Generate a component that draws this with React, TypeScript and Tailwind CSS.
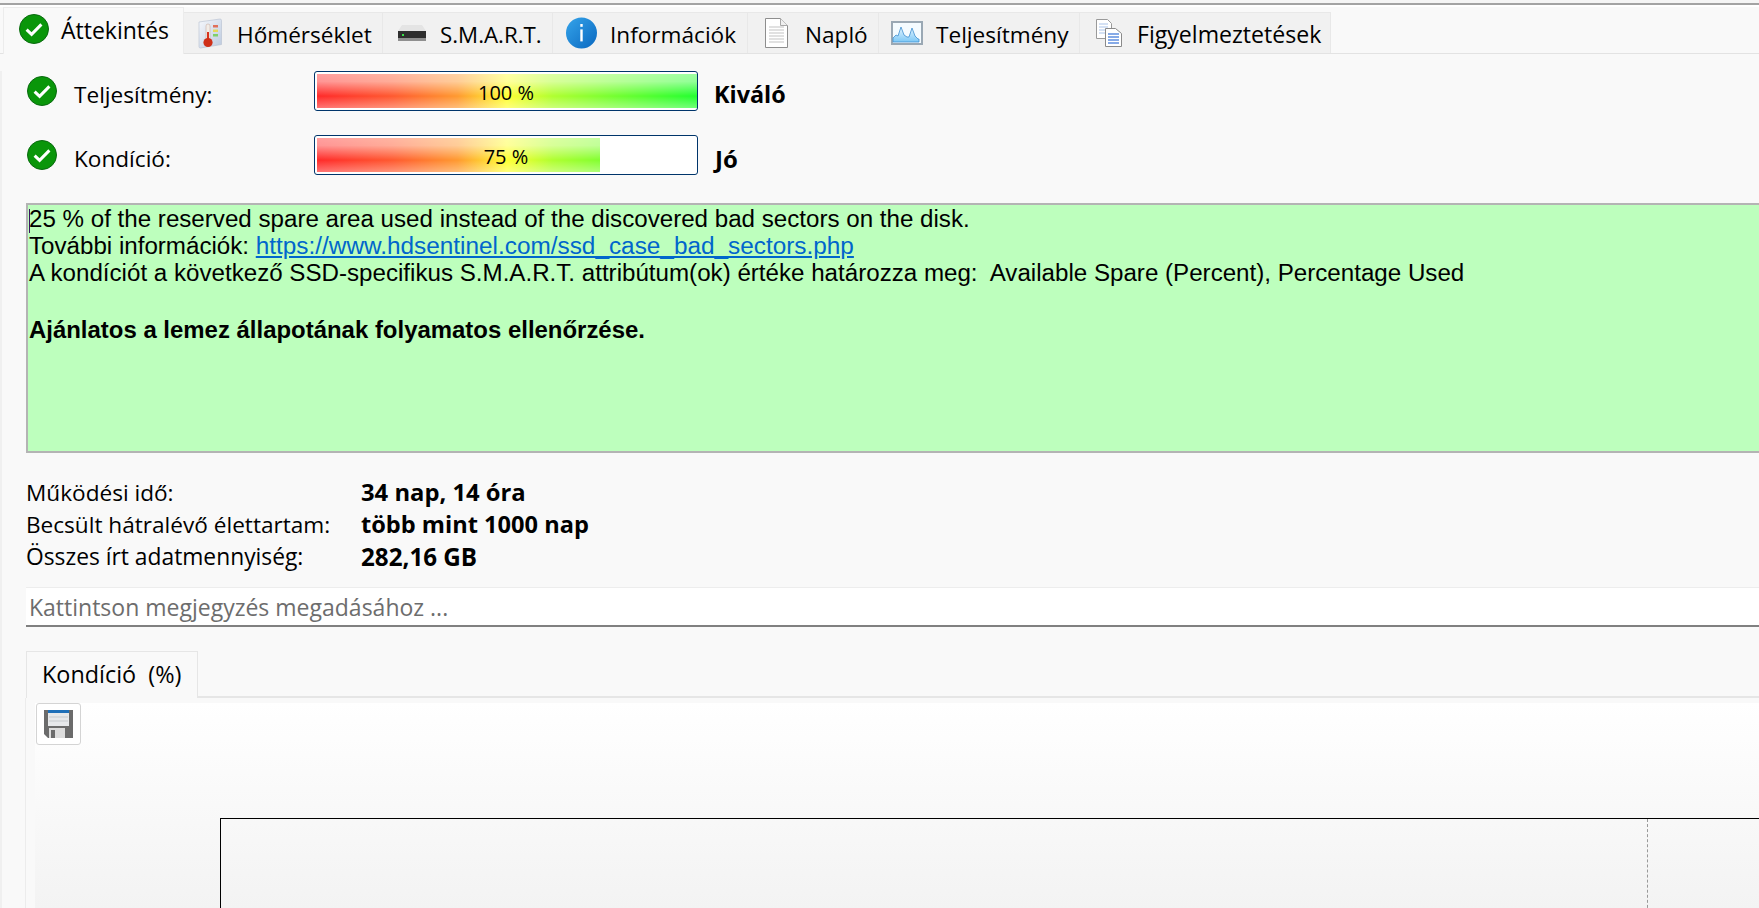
const CheckIcon = ({ size = 30 }: { size?: number }) => (
  <svg width={size} height={size} viewBox="0 0 30 30" className="shrink-0">
    <circle cx="15" cy="15" r="14.5" fill="#0a960a" stroke="#0a6a10" strokeWidth="1" />
    <path d="M7.6 15.6l5 4.8 9.8-10" fill="none" stroke="#fff" strokeWidth="3" />
  </svg>
)

const ThermoIcon = () => (
  <svg width="24" height="31" viewBox="0 0 24 31" className="shrink-0">
    <defs>
      <linearGradient id="thermo" x1="0" y1="0" x2="1" y2="1">
        <stop offset="0" stopColor="#f6f8fc" />
        <stop offset="1" stopColor="#bccadf" />
      </linearGradient>
    </defs>
    <path d="M1 4l21-3q1.500 0 1.500 1.500v24l-21 3.500q-1.500 0-1.500-1.500z" fill="url(#thermo)" stroke="#b6c0d0" strokeWidth="0.6" />
    <path d="M8 8q0-2 2-2t2 2v15h-4z" fill="#f2ede8" stroke="#c9b0a6" strokeWidth="0.6" />
    <path d="M9 14h2v10H9z" fill="#d8321e" />
    <circle cx="10" cy="24.500" r="4.600" fill="#cf2f18" />
    <path d="M15 7h5v2.500h-5z" fill="#e0705a" />
    <path d="M15 11.500h5V14h-5z" fill="#e6d85a" />
    <path d="M15 16h5v2.500h-5z" fill="#7fd06a" />
  </svg>
)

const DriveIcon = () => (
  <svg width="28" height="16" viewBox="0 0 28 16" className="shrink-0">
    <path d="M4 0h20l4 6H0z" fill="#e4e4e4" />
    <path d="M0 6h28v10H0z" fill="#2e2e2e" />
    <path d="M0 13h28v3H0z" fill="#8f8f8f" />
    <path d="M4 9h2v2H4z" fill="#39e04a" />
  </svg>
)

const InfoIcon = () => (
  <svg width="31" height="32" viewBox="0 0 31 32" className="shrink-0">
    <defs>
      <linearGradient id="info" x1="0" y1="0" x2="1" y2="1">
        <stop offset="0" stopColor="#35a4ea" />
        <stop offset="1" stopColor="#0a68c0" />
      </linearGradient>
    </defs>
    <circle cx="15.500" cy="16" r="15.500" fill="url(#info)" />
    <rect x="14.300" y="7" width="2.400" height="2.800" fill="#fff" />
    <rect x="14.300" y="12.400" width="2.400" height="12" fill="#fff" />
  </svg>
)

const DocIcon = () => (
  <svg width="23" height="30" viewBox="0 0 23 30" className="shrink-0">
    <path d="M.5.5h15l7 7v22H.5z" fill="#fff" stroke="#8e8e8e" />
    <path d="M15.500.5v7h7" fill="#efefef" stroke="#a8a8a8" />
    <path d="M4 9h15M4 12h15M4 15h15M4 18h15M4 21h15M4 24h15" stroke="#c4c4c4" strokeWidth="1.200" />
  </svg>
)

const PerfIcon = () => (
  <svg width="32" height="24" viewBox="0 0 32 24" className="shrink-0">
    <defs>
      <linearGradient id="perf" x1="0" y1="0" x2="0" y2="1">
        <stop offset="0" stopColor="#e6f5ff" />
        <stop offset="1" stopColor="#7cc8f6" />
      </linearGradient>
    </defs>
    <rect x="1" y="1" width="30" height="22" fill="#f4fbff" stroke="#9aa8b4" strokeWidth="2" />
    <path d="M2 21V17l3-3 2 1 3-9 3 8 3 2 2 0 3-9 3 8 3 3 1 0v3z" fill="url(#perf)" stroke="#3f8fd0" strokeWidth="0.800" />
  </svg>
)

const DocsIcon = () => (
  <svg width="26" height="28" viewBox="0 0 26 28" className="shrink-0">
    <path d="M.5.5h11l4 4v15H.5z" fill="#fff" stroke="#9a9a9a" />
    <path d="M3 5h9M3 8h9M3 11h9M3 14h9" stroke="#a9c3ea" strokeWidth="1.200" />
    <path d="M9.500 9.500h10l6 5v13h-16z" fill="#fff" stroke="#8a8a8a" />
    <path d="M12 15h11M12 18h11M12 21h11M12 24h11" stroke="#5f8fe0" strokeWidth="1.400" />
  </svg>
)

const SaveIcon = () => (
  <svg width="29" height="28" viewBox="0 0 29 28">
    <path d="M0 0h29v28H4l-4-4z" fill="#6b6b6b" />
    <path d="M4 0h21v3H4z" fill="#1e6fb8" />
    <path d="M4 3h21v13H4z" fill="#e6e8ea" />
    <path d="M5 7h19M5 11h19" stroke="#c6cacd" />
    <path d="M5 18h16v10H5z" fill="#dcdcdc" />
    <path d="M7 20h4v8H7z" fill="#6b6b6b" />
  </svg>
)

const tabs = [
  { label: 'Hőmérséklet', icon: <ThermoIcon />, box: 'w-[199px] pl-[14px] gap-[15px]', text: 'pt-[3px]' },
  { label: 'S.M.A.R.T.', icon: <DriveIcon />, box: 'w-[170px] pl-[15px] gap-[14px]', text: 'pt-[3px] text-[22.3px]' },
  { label: 'Információk', icon: <InfoIcon />, box: 'w-[195px] pl-[13px] gap-[13px]', text: 'pt-[3px]' },
  { label: 'Napló', icon: <DocIcon />, box: 'w-[131px] pl-[17px] gap-[17px]', text: 'pt-[3px]' },
  { label: 'Teljesítmény', icon: <PerfIcon />, box: 'w-[201px] pl-[12px] gap-[13px]', text: 'pt-[3px]' },
  { label: 'Figyelmeztetések', icon: <DocsIcon />, box: 'w-[251px] pl-[16px] gap-[15px]', text: 'pt-[3px] text-[23.1px]' },
]

const barFill =
  'h-full w-[380px] bg-[linear-gradient(180deg,rgba(255,255,255,0.55)_0%,rgba(255,255,255,0.5)_22%,rgba(255,255,255,0)_65%,rgba(255,255,255,0.35)_100%),linear-gradient(90deg,#ff2a2a_0%,#ff5a30_20%,#ff9a30_37%,#ffff33_50%,#b0ff30_62%,#80ff30_75%,#22ff30_100%)]'

function Bar({ fillWidth, text }: { fillWidth: string; text: string }) {
  return (
    <div className="relative h-[40px] w-[384px] rounded-[3px] border border-[#00356b] bg-white p-[2px]">
      <div className={`h-[34px] overflow-hidden ${fillWidth}`}>
        <div className={barFill} />
      </div>
      <span className="absolute inset-0 flex items-center justify-center pt-[4px] text-[20px] text-black">{text}</span>
    </div>
  )
}

export default function App() {
  return (
    <div className="h-[908px] w-[1759px] overflow-hidden bg-[#f9f9f9] font-['Open_Sans',sans-serif] text-[22.6px] text-black">
      {/* window edge */}
      <div className="h-[3px] bg-[#f5f5f5]" />
      <div className="h-[2px] bg-[#a3a3a3]" />
      <div className="h-[2px] bg-white" />

      {/* Tab bar */}
      <div className="flex h-[47px] items-end border-b border-[#e3e3e3] pl-[3px]">
        <div className="z-10 -mb-[1px] flex h-[47px] w-[181px] shrink-0 items-start gap-[12px] border-x border-t border-[#ececec] bg-[#f9f9f9] pl-[15px] pt-[6px]">
          <CheckIcon />
          <span className="text-[23px] leading-[32px]">Áttekintés</span>
        </div>
        {tabs.map((t) => (
          <div
            key={t.label}
            className={`flex h-[41px] shrink-0 items-center border-r border-t border-[#e8e8e8] bg-[#f1f1f1] ${t.box}`}
          >
            {t.icon}
            <span className={t.text}>{t.label}</span>
          </div>
        ))}
      </div>

      {/* Page */}
      <div className="border-l-2 border-[#f0f0f0] pl-[24px]">
        <div className="mt-[17px] flex h-[40px] items-center">
          <div className="w-[48px] pl-[1px]"><CheckIcon /></div>
          <span className="w-[240px] pt-[8px]">Teljesítmény:</span>
          <Bar fillWidth="w-[380px]" text="100 %" />
          <span className="ml-[16px] pt-[7px] text-[23.4px] font-bold">Kiváló</span>
        </div>
        <div className="mt-[24px] flex h-[40px] items-center">
          <div className="w-[48px] pl-[1px]"><CheckIcon /></div>
          <span className="w-[240px] pt-[8px]">Kondíció:</span>
          <Bar fillWidth="w-[283px]" text="75 %" />
          <span className="ml-[17px] pt-[7px] text-[24px] font-bold">Jó</span>
        </div>

        {/* Message box */}
        <div className="relative mt-[28px] h-[250px] w-[1800px] border-2 border-[#b4b4b4] bg-[#bdffbd] pl-[1px] font-['Liberation_Sans',sans-serif] text-[24.15px] leading-[27px]">
          <span className="absolute left-[1px] top-[4px] h-[24px] w-[1px] bg-[#3a1060]" />
          <p>25 % of the reserved spare area used instead of the discovered bad sectors on the disk.</p>
          <p>
            További információk:{' '}
            <span className="text-[24.35px] text-[#0066cc] underline">https://www.hdsentinel.com/ssd_case_bad_sectors.php</span>
          </p>
          <p>A kondíciót a következő SSD-specifikus S.M.A.R.T. attribútum(ok) értéke határozza meg:&nbsp; Available Spare (Percent), Percentage Used</p>
          <p className="h-[30px]">&nbsp;</p>
          <p className="text-[23.95px] font-bold">Ajánlatos a lemez állapotának folyamatos ellenőrzése.</p>
        </div>

        {/* Stats */}
        <div className="mt-[24px] flex h-[32px] items-center">
          <span className="w-[335px]">Működési idő:</span>
          <span className="text-[23.8px] font-bold">34 nap, 14 óra</span>
        </div>
        <div className="flex h-[32px] items-center">
          <span className="w-[335px]">Becsült hátralévő élettartam:</span>
          <span className="text-[23.6px] font-bold">több mint 1000 nap</span>
        </div>
        <div className="flex h-[32px] items-center">
          <span className="w-[335px] text-[22.8px]">Összes írt adatmennyiség:</span>
          <span className="text-[24.2px] font-bold">282,16 GB</span>
        </div>

        {/* Note */}
        <div className="mt-[14px] flex h-[40px] w-[1800px] items-center border-b-2 border-t border-b-[#808080] border-t-[#ededed] bg-white pl-[3px] pt-[2px] text-[23px] text-[#6d6d6d]">
          Kattintson megjegyzés megadásához ...
        </div>

        {/* Chart tab */}
        <div className="mt-[24px] flex h-[47px] w-[1800px] items-stretch border-b-2 border-[#e6e6e6]">
          <div className="-mb-[2px] flex w-[172px] items-center border-x border-t border-[#e6e6e6] bg-[#f9f9f9] pl-[15px] text-[23.4px]">
            Kondíció&nbsp; (%)
          </div>
        </div>
        <div className="ml-[-1px] border-l border-[#ececec] pl-[9px] pt-[5px]">
          <div className="h-[205px] w-[1800px] bg-[linear-gradient(180deg,#ffffff_0%,#f3f3f3_100%)]">
            <div className="ml-[1px] flex h-[42px] w-[45px] items-center justify-center rounded-[3px] border border-[#d4d4d4] bg-white">
              <SaveIcon />
            </div>
            <div className="ml-[185px] mt-[73px] h-[100px] border-l border-t border-black pl-[1426px]">
              <div className="h-full w-0 border-l border-dashed border-[#999999]" />
            </div>
          </div>
        </div>
      </div>
    </div>
  )
}
